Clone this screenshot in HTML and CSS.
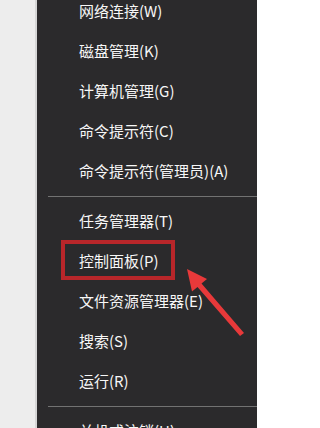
FILE: index.html
```html
<!DOCTYPE html>
<html lang="zh-CN">
<head>
<meta charset="utf-8">
<link rel="stylesheet" href="styles.css">
</head>
<body>
<div class="page">
  <div class="desk"></div>
  <div class="menu">
    <div class="list">
      <div class="item">网络连接(W)</div>
      <div class="item">磁盘管理(K)</div>
      <div class="item">计算机管理(G)</div>
      <div class="item">命令提示符(C)</div>
      <div class="item">命令提示符(管理员)(A)</div>
      <div class="sep"></div>
      <div class="item">任务管理器(T)</div>
      <div class="item marked">控制面板(P)<span class="box"></span></div>
      <div class="item">文件资源管理器(E)</div>
      <div class="item">搜索(S)</div>
      <div class="item">运行(R)</div>
      <div class="sep"></div>
      <div class="item">关机或注销(U)</div>
    </div>
  </div>
  <svg class="arrow" width="257" height="428" viewBox="0 0 257 428">
    <path d="M187 269 L207 279 L201.5 283.5 L244 333 L240 336 L197.5 287 L192 291.5 Z" fill="#e8393a"/>
  </svg>
</div>
</body>
</html>
```

FILE: styles.css
```css
html, body {
  margin: 0;
  padding: 0;
  width: 257px;
  height: 428px;
  overflow: hidden;
}
.page {
  position: relative;
  display: flex;
  width: 257px;
  height: 428px;
  font-family: "Noto Sans CJK SC", "Microsoft YaHei", sans-serif;
}
.desk {
  width: 35px;
  background: #ededed;
  border-right: 2px solid #d6d6d6;
}
.menu {
  flex: 1;
  background: #2b2a2c;
  overflow: hidden;
}
.list {
  margin-top: -9px;
  display: flex;
  flex-direction: column;
}
.item {
  position: relative;
  height: 40px;
  line-height: 40px;
  padding-left: 42px;
  color: #f7f7f7;
  font-size: 15px;
  white-space: nowrap;
}
.sep {
  height: 10px;
  margin-left: 11px;
  display: flex;
  align-items: center;
}
.sep::before {
  content: "";
  flex: 1;
  height: 1px;
  background: #727272;
}
.box {
  position: absolute;
  left: 24px;
  top: -1px;
  width: 106px;
  height: 32px;
  border: 4px solid #b8262a;
}
.arrow {
  position: absolute;
  left: 0;
  top: 0;
}
```
